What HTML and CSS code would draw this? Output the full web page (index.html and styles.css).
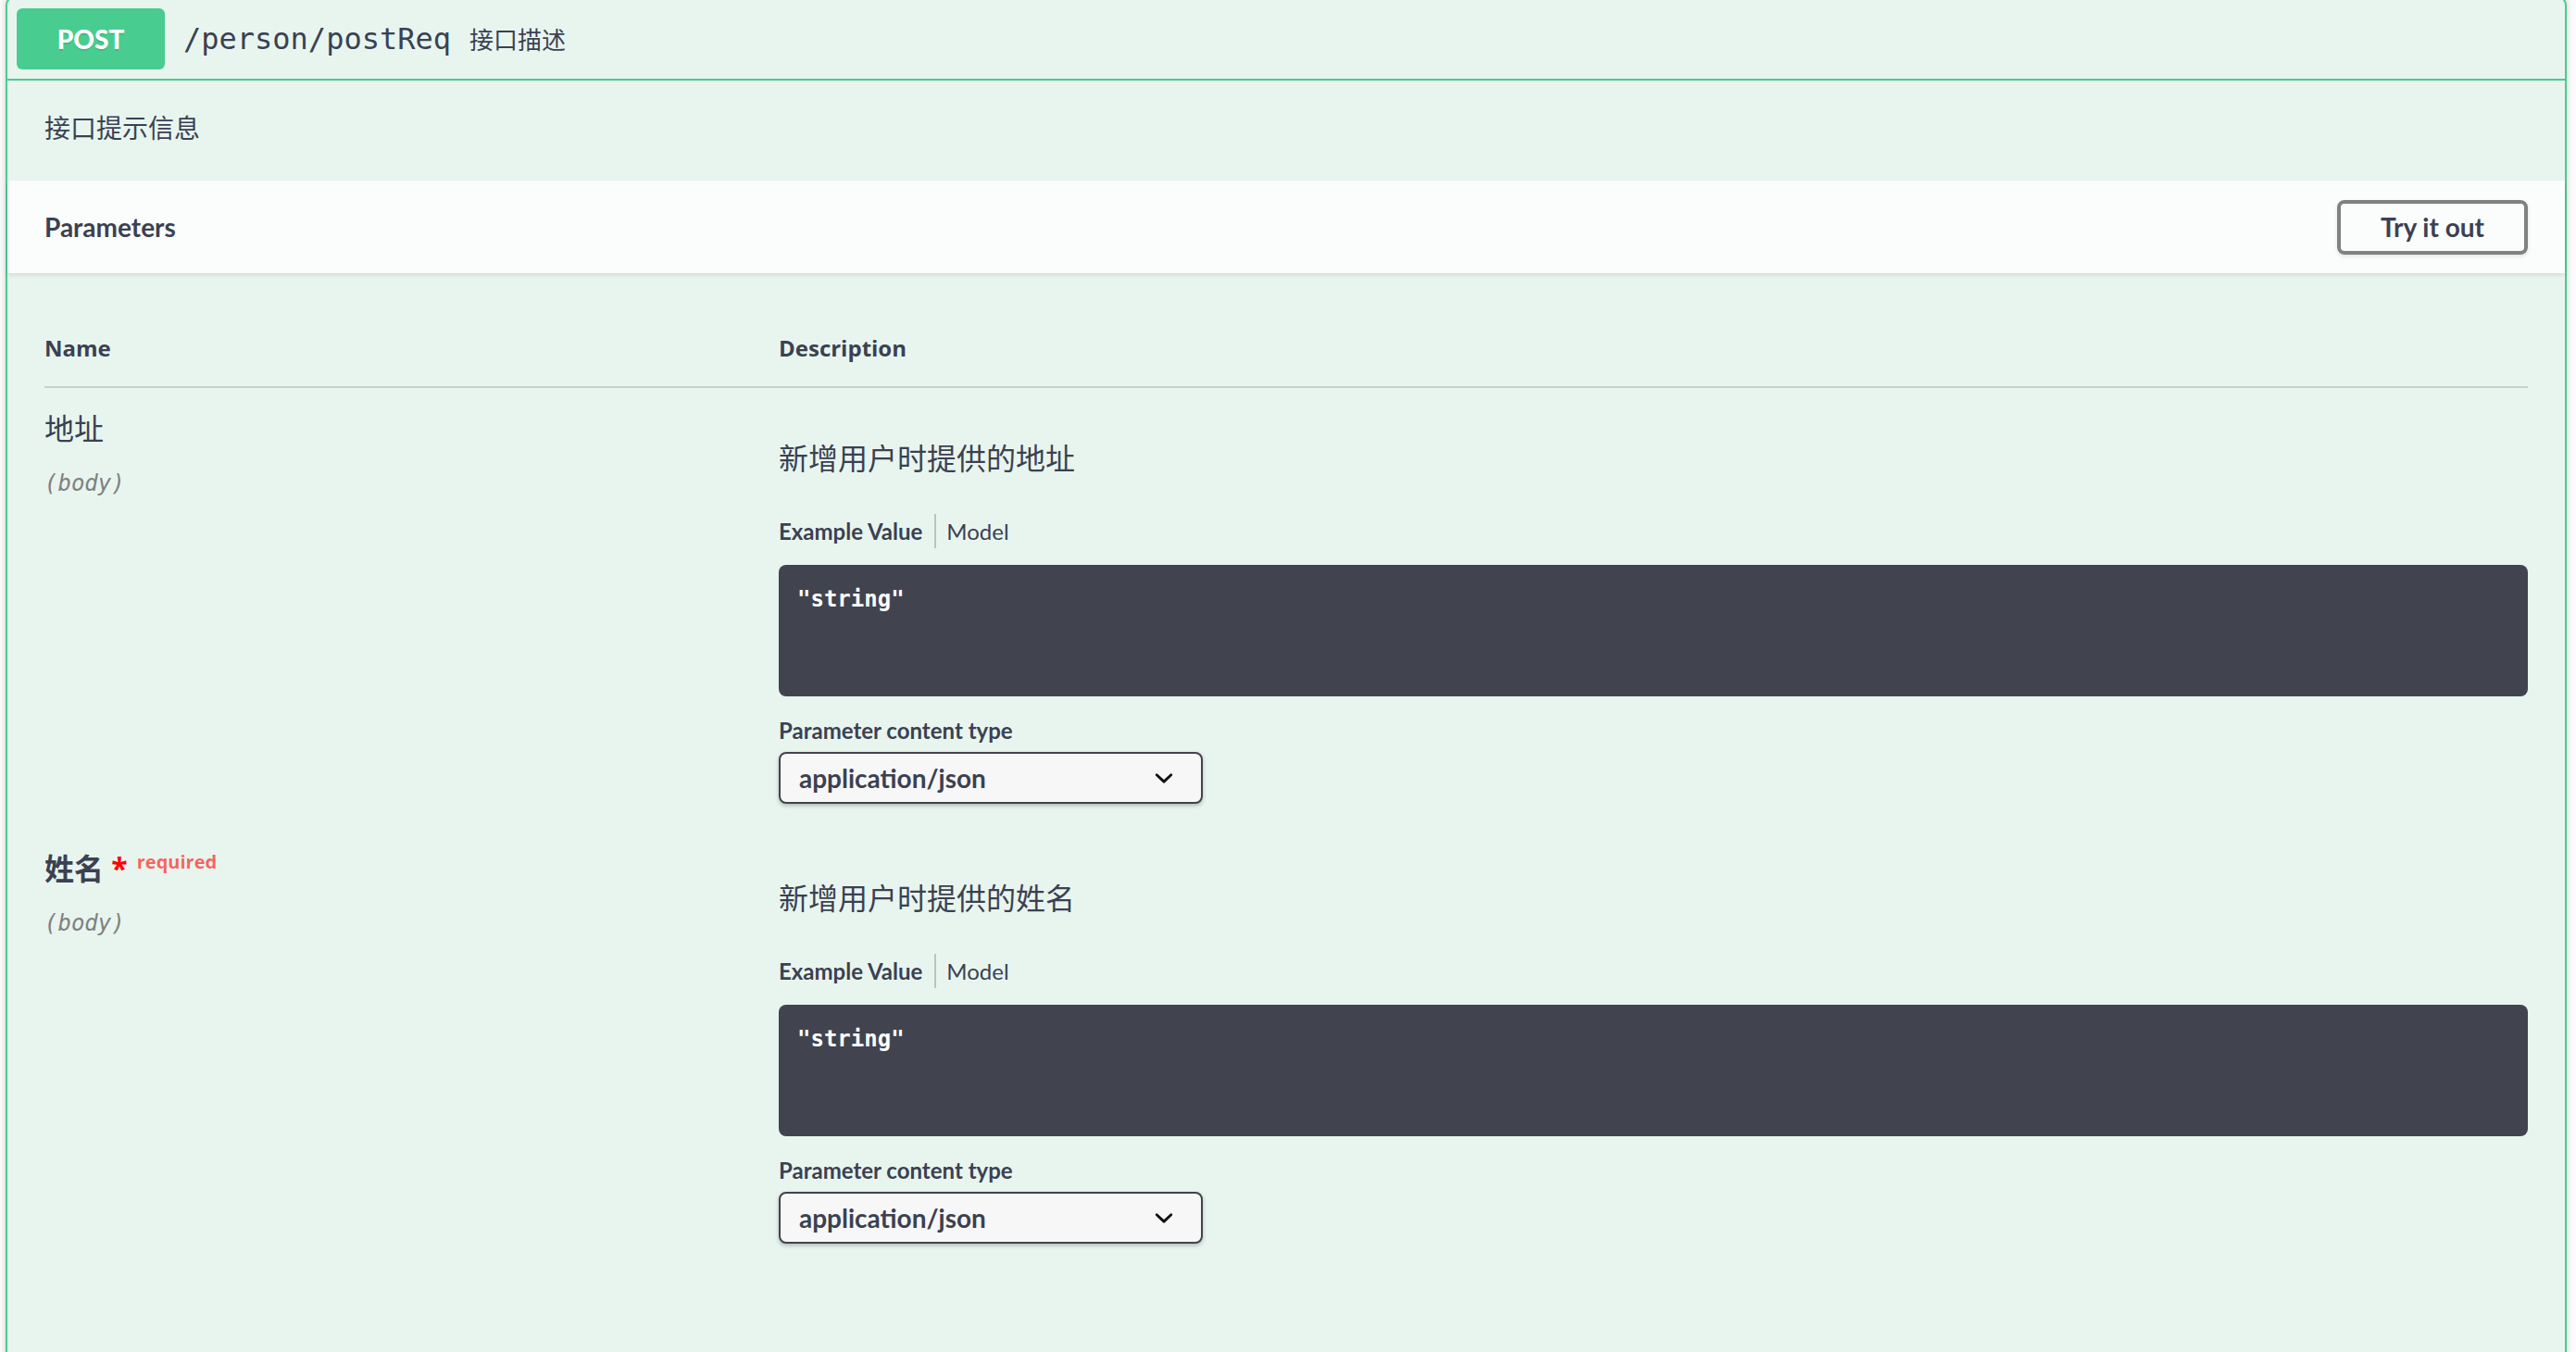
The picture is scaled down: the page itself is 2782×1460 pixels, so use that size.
FILE: index.html
```html
<!DOCTYPE html>
<html lang="zh-CN">
<head>
<meta charset="utf-8">
<title>POST /person/postReq</title>
<link rel="stylesheet" href="styles.css">
</head>
<body>
<div class="opblock">
  <div class="summary">
    <span class="method">POST</span>
    <span class="path">/person/postReq</span>
    <span class="summary-desc">接口描述</span>
  </div>
  <div class="description">接口提示信息</div>
  <div class="section-header">
    <h4 class="section-title">Parameters</h4>
    <button class="btn-try" type="button">Try it out</button>
  </div>
  <div class="table-container">
    <div class="params">
      <div class="th">Name</div>
      <div class="th">Description</div>

      <div class="td">
        <div class="param-name">地址</div>
        <div class="param-in">(body)</div>
      </div>
      <div class="td td-desc">
        <p class="markdown">新增用户时提供的地址</p>
        <ul class="tabs"><li class="tab active">Example Value</li><li class="tab">Model</li></ul>
        <div class="code">"string"</div>
        <div class="ct-label">Parameter content type</div>
        <div class="select"><span>application/json</span><svg class="chev" viewBox="0 0 20 20" width="40" height="40"><path d="M13.418 7.859a.695.695 0 01.978 0 .68.68 0 010 .969l-3.908 3.83a.697.697 0 01-.979 0l-3.908-3.830a.68.68 0 010-.969.695.695 0 01.978 0L10 11l3.418-3.141z" fill="#111"/></svg></div>
      </div>

      <div class="td">
        <div class="param-name required">姓名<span class="star">&nbsp;*</span><span class="req">required</span></div>
        <div class="param-in">(body)</div>
      </div>
      <div class="td td-desc">
        <p class="markdown">新增用户时提供的姓名</p>
        <ul class="tabs"><li class="tab active">Example Value</li><li class="tab">Model</li></ul>
        <div class="code">"string"</div>
        <div class="ct-label">Parameter content type</div>
        <div class="select"><span>application/json</span><svg class="chev" viewBox="0 0 20 20" width="40" height="40"><path d="M13.418 7.859a.695.695 0 01.978 0 .68.68 0 010 .969l-3.908 3.83a.697.697 0 01-.979 0l-3.908-3.830a.68.68 0 010-.969.695.695 0 01.978 0L10 11l3.418-3.141z" fill="#111"/></svg></div>
      </div>
    </div>
  </div>
</div>
</body>
</html>
```
FILE: styles.css
```css
html, body {
  margin: 0;
  padding: 0;
  height: 100%;
  overflow: hidden;
  background: #fafafa;
}
body {
  font-family: "Open Sans", "Noto Sans CJK SC", sans-serif;
  color: #3b4151;
}
.opblock {
  margin: -3px 10px 0 6px;
  min-height: 1600px;
  box-sizing: border-box;
  border: 2px solid #49cc90;
  border-radius: 8px;
  background: #e8f5ef;
  box-shadow: 0 0 6px rgba(0, 0, 0, .19);
}
.summary {
  display: flex;
  align-items: center;
  padding: 10px;
  border-bottom: 2px solid #49cc90;
}
.method {
  width: 160px;
  height: 66px;
  line-height: 66px;
  text-align: center;
  background: #49cc90;
  color: #fff;
  border-radius: 6px;
  font-family: "Lato", sans-serif;
  font-weight: 900;
  font-size: 28px;
  text-shadow: 0 2px 0 rgba(0, 0, 0, .1);
}
.path {
  padding: 0 20px;
  font-family: "DejaVu Sans Mono", monospace;
  font-weight: 400;
  font-size: 32px;
  color: #3b4151;
}
.summary-desc {
  font-size: 26px;
}
.description {
  padding: 30px 40px 36px;
  font-size: 28px;
  line-height: 42px;
}
.section-header {
  display: flex;
  align-items: center;
  justify-content: space-between;
  height: 100px;
  box-sizing: border-box;
  padding: 0 40px;
  background: rgba(255, 255, 255, .8);
  box-shadow: 0 2px 4px rgba(0, 0, 0, .1);
}
.section-title {
  margin: 0;
  font-family: "Lato", sans-serif;
  font-weight: 700;
  font-size: 28px;
}
.btn-try {
  width: 206px;
  height: 59px;
  padding: 0;
  border: 4px solid #808080;
  border-radius: 8px;
  background: transparent;
  color: #3b4151;
  font-family: "Lato", sans-serif;
  font-weight: 700;
  font-size: 28px;
  box-shadow: 0 2px 4px rgba(0, 0, 0, .1);
}
.table-container {
  padding: 40px;
}
.params {
  display: grid;
  grid-template-columns: 793px 1fr;
}
.th {
  padding: 24px 0;
  line-height: 34px;
  font-size: 24px;
  font-weight: 700;
  border-bottom: 2px solid rgba(59, 65, 81, .2);
}
.td {
  padding-top: 20px;
}
.td-desc {
  padding-bottom: 26px;
}
.param-name {
  font-size: 32px;
  line-height: 48px;
}
.param-name.required {
  font-weight: 700;
}
.star {
  color: red;
}
.req {
  font-size: 20px;
  line-height: 20px;
  vertical-align: 12px;
  padding: 0 10px;
  color: rgba(255, 0, 0, .6);
}
.param-in {
  margin-top: 17px;
  font-family: "DejaVu Sans Mono", monospace;
  font-style: italic;
  font-size: 24px;
  line-height: 36px;
  color: #808080;
}
.markdown {
  margin: 32px 0;
  font-size: 32px;
  line-height: 48px;
}
.tabs {
  display: flex;
  list-style: none;
  margin: 0 0 18px;
  padding: 4px 0 0;
  font-family: "Lato", sans-serif;
  font-size: 24px;
  line-height: 37px;
}
.tab:first-child {
  padding-right: 13px;
  margin-right: 11px;
  border-right: 2px solid rgba(0, 0, 0, .2);
}
.tab.active {
  font-weight: 700;
}
.code {
  height: 142px;
  box-sizing: border-box;
  padding: 20px;
  background: #41444e;
  border-radius: 8px;
  color: #fff;
  font-family: "DejaVu Sans Mono", monospace;
  font-weight: 700;
  font-size: 24px;
  line-height: 34px;
  white-space: pre;
}
.ct-label {
  margin-top: 20px;
  font-family: "Lato", sans-serif;
  font-weight: 700;
  font-size: 24px;
  line-height: 34px;
}
.select {
  margin-top: 6px;
  width: 458px;
  height: 56px;
  box-sizing: border-box;
  display: flex;
  align-items: center;
  padding: 0 20px;
  border: 2px solid #41444e;
  border-radius: 8px;
  background: #f7f7f7;
  box-shadow: 0 2px 4px rgba(0, 0, 0, .25);
  font-family: "Lato", sans-serif;
  font-weight: 700;
  font-size: 28px;
}
.chev {
  margin-left: auto;
  flex: none;
}
```
